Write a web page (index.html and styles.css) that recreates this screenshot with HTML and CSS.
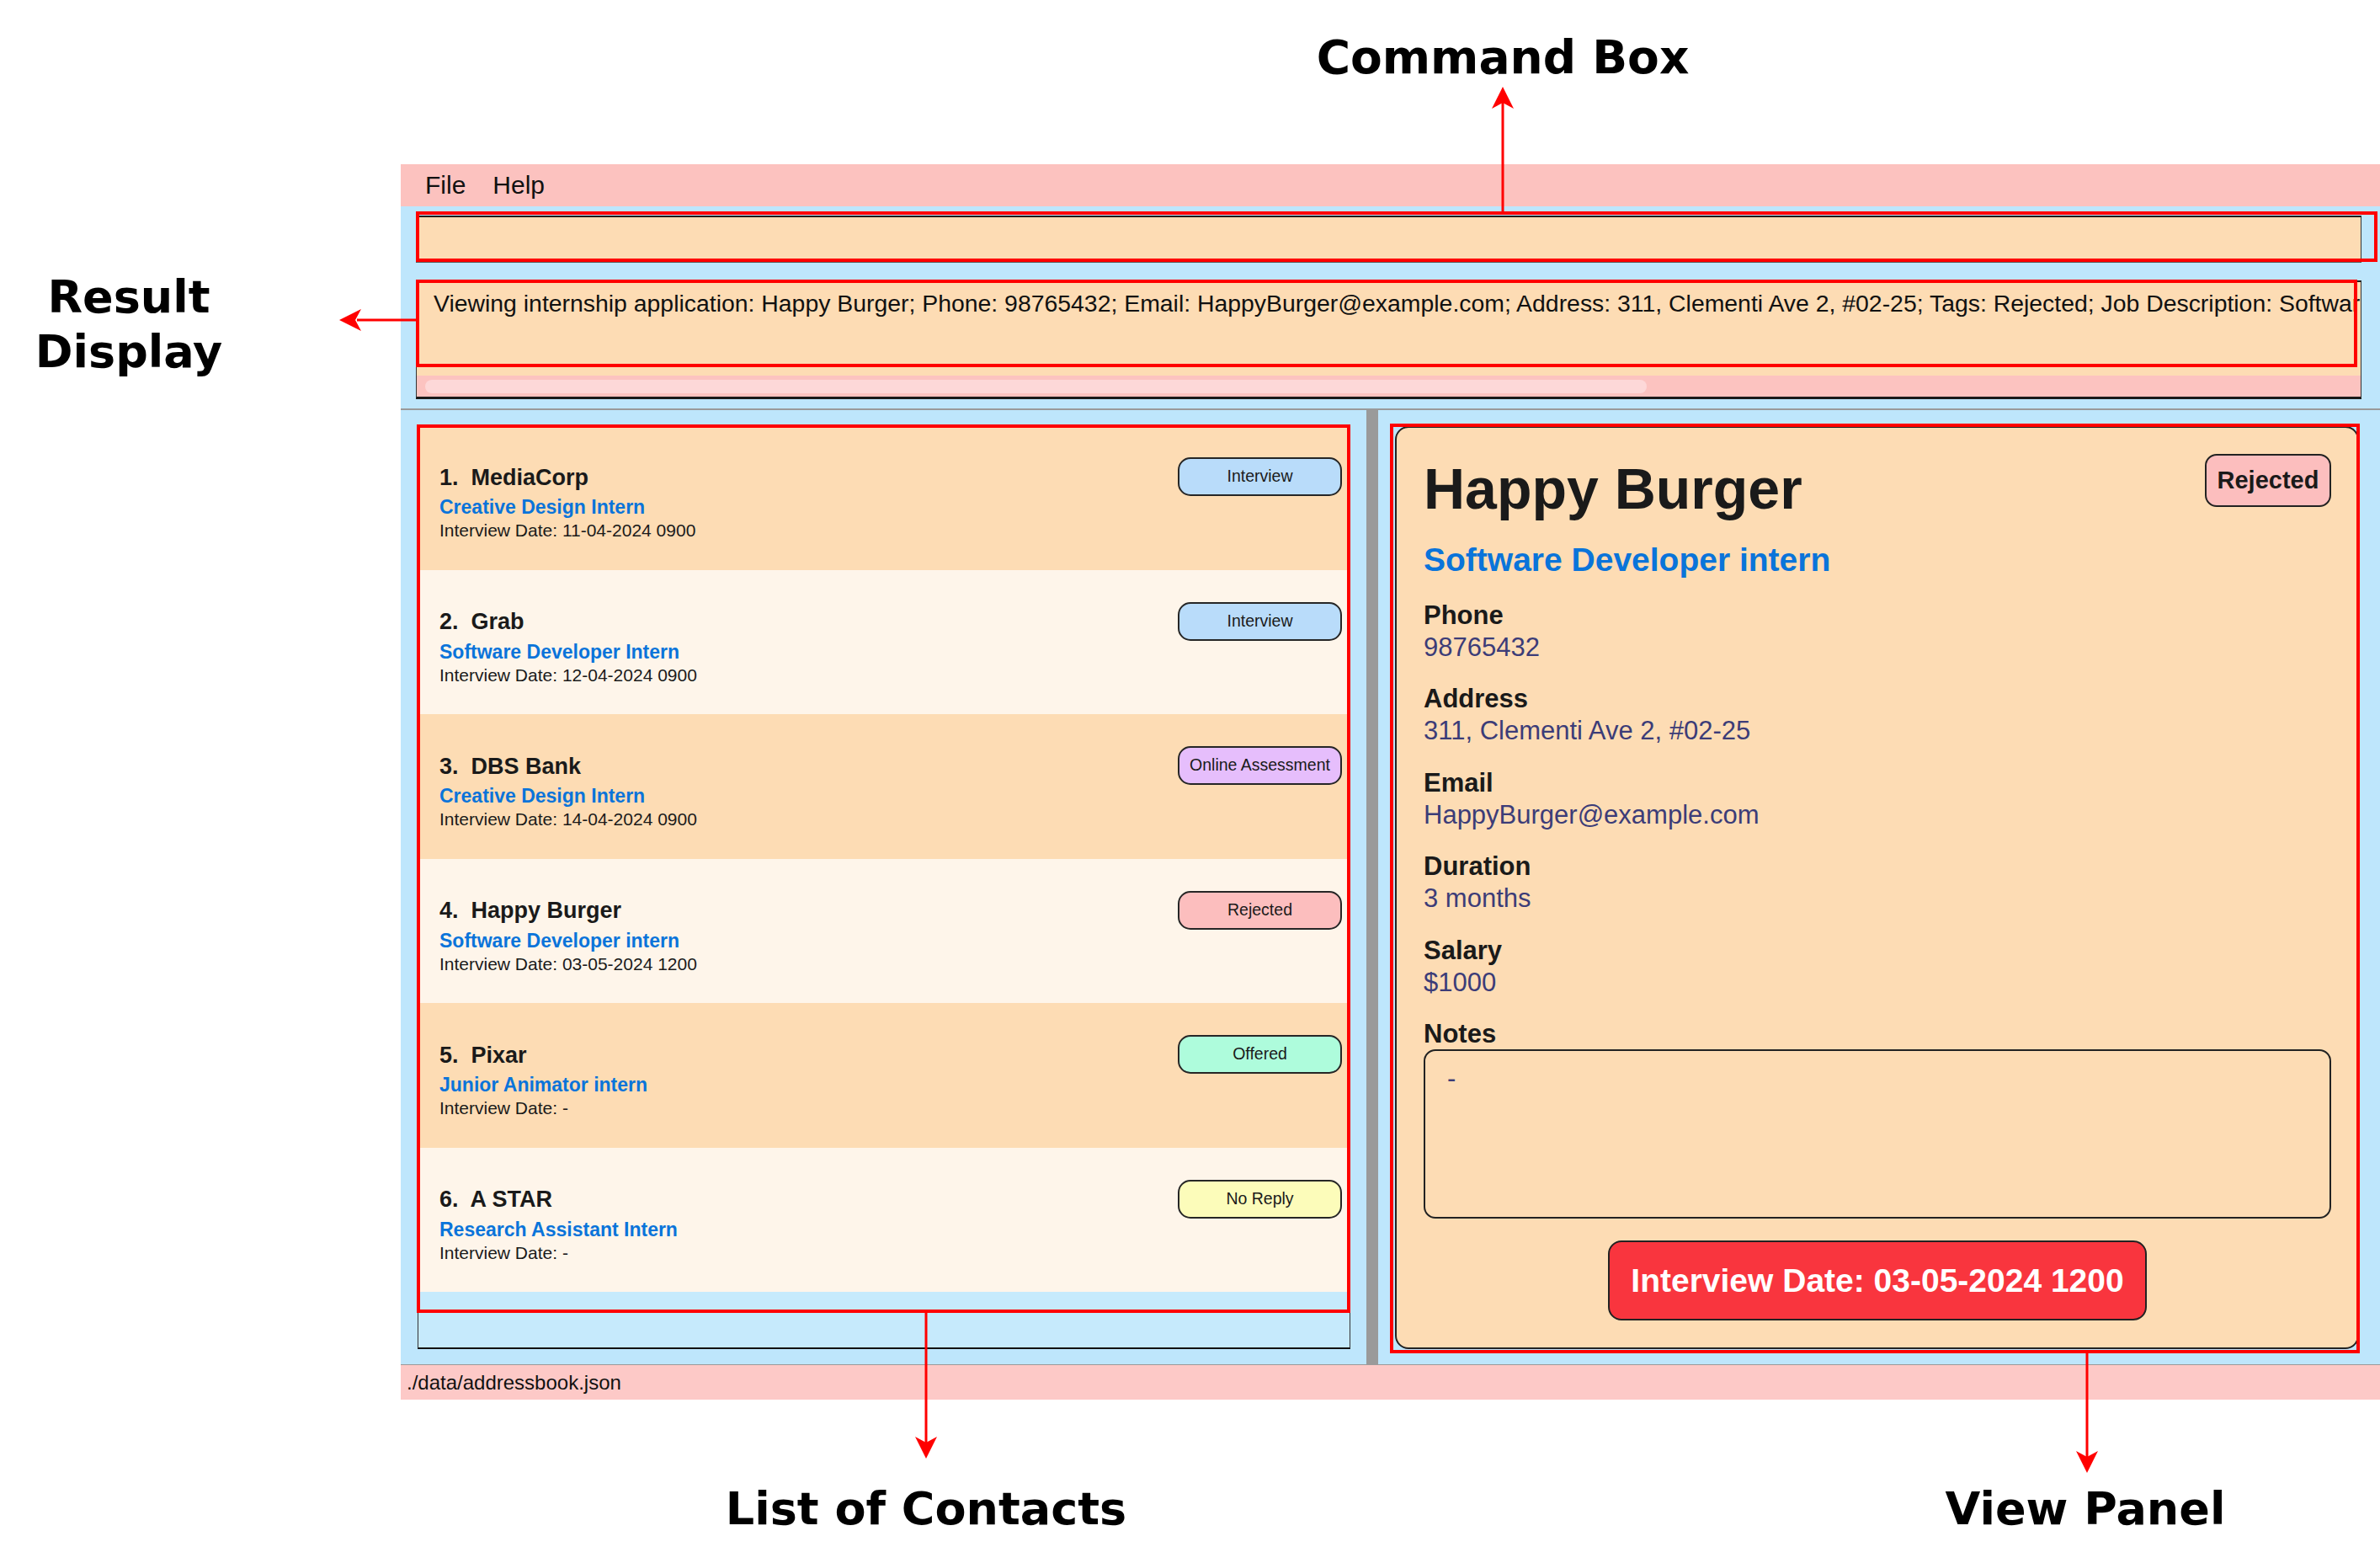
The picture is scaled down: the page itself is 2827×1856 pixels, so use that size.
FILE: index.html
```html
<!DOCTYPE html>
<html>
<head>
<meta charset="utf-8">
<title>Internship Tracker</title>
<link rel="stylesheet" href="styles.css">
</head>
<body>
<div class="canvas">
  <div class="window">
    <div class="menubar">
      <span class="menu">File</span>
      <span class="menu">Help</span>
    </div>
    <div class="main">
      <div class="command-area">
        <div class="command-box"></div>
        <div class="mark mark-command"></div>
      </div>
      <div class="result-area">
        <div class="result-box">
          <div class="result-text">Viewing internship application: Happy Burger; Phone: 98765432; Email: HappyBurger@example.com; Address: 311, Clementi Ave 2, #02-25; Tags: Rejected; Job Description: Software Developer intern; Interview Date: 03-05-2024 1200; Duration: 3 months; Salary: $1000; Notes: -</div>
          <div class="scrollbar"><div class="thumb"></div></div>
        </div>
        <div class="mark mark-result"></div>
      </div>
      <div class="split">
        <div class="list-pane">
          <div class="list-box">
            <div class="card odd">
              <div class="card-info">
                <div class="card-name">1.  MediaCorp</div>
                <div class="card-role">Creative Design Intern</div>
                <div class="card-date">Interview Date: 11-04-2024 0900</div>
              </div>
              <div class="tag tag-interview">Interview</div>
            </div>
            <div class="card even">
              <div class="card-info">
                <div class="card-name">2.  Grab</div>
                <div class="card-role">Software Developer Intern</div>
                <div class="card-date">Interview Date: 12-04-2024 0900</div>
              </div>
              <div class="tag tag-interview">Interview</div>
            </div>
            <div class="card odd">
              <div class="card-info">
                <div class="card-name">3.  DBS Bank</div>
                <div class="card-role">Creative Design Intern</div>
                <div class="card-date">Interview Date: 14-04-2024 0900</div>
              </div>
              <div class="tag tag-oa">Online Assessment</div>
            </div>
            <div class="card even">
              <div class="card-info">
                <div class="card-name">4.  Happy Burger</div>
                <div class="card-role">Software Developer intern</div>
                <div class="card-date">Interview Date: 03-05-2024 1200</div>
              </div>
              <div class="tag tag-rejected">Rejected</div>
            </div>
            <div class="card odd">
              <div class="card-info">
                <div class="card-name">5.  Pixar</div>
                <div class="card-role">Junior Animator intern</div>
                <div class="card-date">Interview Date: -</div>
              </div>
              <div class="tag tag-offered">Offered</div>
            </div>
            <div class="card even">
              <div class="card-info">
                <div class="card-name">6.  A STAR</div>
                <div class="card-role">Research Assistant Intern</div>
                <div class="card-date">Interview Date: -</div>
              </div>
              <div class="tag tag-noreply">No Reply</div>
            </div>
          </div>
          <div class="mark mark-list"></div>
        </div>
        <div class="divider"></div>
        <div class="view-pane">
          <div class="view-card">
            <div class="view-header">
              <div class="view-title">Happy Burger</div>
              <div class="view-tag">Rejected</div>
            </div>
            <div class="view-role">Software Developer intern</div>
            <div class="field">
              <div class="field-label">Phone</div>
              <div class="field-value">98765432</div>
            </div>
            <div class="field">
              <div class="field-label">Address</div>
              <div class="field-value">311, Clementi Ave 2, #02-25</div>
            </div>
            <div class="field">
              <div class="field-label">Email</div>
              <div class="field-value">HappyBurger@example.com</div>
            </div>
            <div class="field">
              <div class="field-label">Duration</div>
              <div class="field-value">3 months</div>
            </div>
            <div class="field">
              <div class="field-label">Salary</div>
              <div class="field-value">$1000</div>
            </div>
            <div class="field">
              <div class="field-label">Notes</div>
            </div>
            <div class="notes-box">-</div>
            <div class="date-button">Interview Date: 03-05-2024 1200</div>
          </div>
          <div class="mark mark-view"></div>
        </div>
      </div>
    </div>
    <div class="statusbar">./data/addressbook.json</div>
  </div>

  <svg class="arrows" width="2827" height="1856" viewBox="0 0 2827 1856">
    <line x1="1785" y1="251" x2="1785" y2="120" />
    <polygon points="1785,103 1772,129 1785,122 1798,129" />
    <line x1="494" y1="380" x2="424" y2="380" />
    <polygon points="403,380 429,367 422,380 429,393" />
    <line x1="1100" y1="1559" x2="1100" y2="1715" />
    <polygon points="1100,1732 1087,1706 1100,1713 1113,1706" />
    <line x1="2479" y1="1607" x2="2479" y2="1732" />
    <polygon points="2479,1749 2466,1723 2479,1730 2492,1723" />
  </svg>

  <div class="note note-command">Command Box</div>
  <div class="note note-result">Result<br>Display</div>
  <div class="note note-list">List of Contacts</div>
  <div class="note note-view">View Panel</div>
</div>
</body>
</html>
```

FILE: styles.css
```css
* {
  box-sizing: border-box;
}

html,
body {
  margin: 0;
  padding: 0;
  background: #ffffff;
}

body {
  width: 2827px;
  height: 1856px;
  overflow: hidden;
  font-family: "Liberation Sans", Arial, sans-serif;
  color: #1a1a1a;
}

.canvas {
  position: relative;
  width: 2827px;
  height: 1856px;
  padding-top: 195px;
  padding-left: 476px;
}

.window {
  width: 2351px;
  display: flex;
  flex-direction: column;
}

/* Menu bar */
.menubar {
  height: 50px;
  background: #fcc2bf;
  display: flex;
  align-items: center;
  padding-left: 13px;
}

.menu {
  font-size: 30px;
  line-height: 1;
  padding: 0 16px;
  color: #111111;
}

/* Main area */
.main {
  background: #bee6fc;
  display: flex;
  flex-direction: column;
}

.command-area {
  position: relative;
  padding: 11px 22px 10px 18px;
}

.command-box {
  height: 56px;
  background: #fddcb4;
  border: 1px solid #333333;
  border-top: 2px solid #1e1e1e;
  border-bottom: 2px solid #5a5a5a;
}

.result-area {
  position: relative;
  padding: 11px 22px 11px 18px;
}

.result-box {
  border: 1px solid #333333;
  border-top: 2px solid #1e1e1e;
  border-bottom: 3px solid #1a1a1a;
  background: #fddcb4;
}

.result-text {
  height: 111px;
  padding: 11px 20px 0 20px;
  font-size: 28.4px;
  line-height: 1;
  white-space: nowrap;
  overflow: hidden;
  color: #111111;
}

.scrollbar {
  height: 25px;
  background: #fcc3c0;
  padding: 5px 10px 4px 10px;
}

.thumb {
  width: 1451px;
  height: 16px;
  border-radius: 8px;
  background: #fdd8d8;
}

/* Split pane */
.split {
  display: flex;
  height: 1136px;
  border-top: 2px solid #9a9a9a;
  border-bottom: 1px solid #9a9a9a;
}

.list-pane {
  position: relative;
  width: 1147px;
  flex: none;
  padding: 17px 19px 18px 20px;
}

.list-box {
  height: 100%;
  border: 1px solid #333333;
  border-bottom: 2px solid #111111;
  background: #c6eafc;
  overflow: hidden;
}

.card {
  height: 171.5px;
  display: flex;
  justify-content: space-between;
  align-items: flex-start;
  padding: 0 9px 0 25px;
}

.card.odd {
  background: #fddcb4;
}

.card.even {
  background: #fef5ea;
}

.card-info {
  padding-top: 48.5px;
}

.card-name {
  font-size: 27px;
  font-weight: bold;
  line-height: 1;
  color: #1a1a1a;
  white-space: pre;
}

.card-role {
  margin-top: 10.5px;
  font-size: 23px;
  font-weight: bold;
  line-height: 1;
  color: #0a74da;
}

.card-date {
  margin-top: 5px;
  font-size: 21px;
  line-height: 1;
  color: #1a1a1a;
}

.tag {
  margin-top: 38px;
  width: 195px;
  height: 46px;
  border: 2px solid #262626;
  border-radius: 15px;
  display: flex;
  align-items: center;
  justify-content: center;
  font-size: 19.5px;
  line-height: 1;
  color: #1a1a1a;
}

.tag-interview {
  background: #b9dcfa;
}

.tag-oa {
  background: #e6befc;
}

.tag-rejected {
  background: #fcbebe;
}

.tag-offered {
  background: #aefcdc;
}

.tag-noreply {
  background: #fcfcba;
}

.divider {
  width: 14px;
  flex: none;
  background: #9a9a9a;
}

/* View panel */
.view-pane {
  position: relative;
  flex: 1;
  padding: 19px 25px 18px 20px;
}

.view-card {
  height: 100%;
  border: 2px solid #222222;
  border-radius: 16px;
  background: #fddcb4;
  padding: 31px 31px 0 32px;
  display: flex;
  flex-direction: column;
}

.view-header {
  display: flex;
  justify-content: space-between;
  align-items: flex-start;
}

.view-title {
  margin-top: 7px;
  font-size: 68px;
  font-weight: bold;
  line-height: 1;
  color: #1a1a1a;
}

.view-tag {
  width: 150px;
  height: 63px;
  border: 2px solid #222222;
  border-radius: 14px;
  background: #fcbebe;
  display: flex;
  align-items: center;
  justify-content: center;
  font-size: 29px;
  font-weight: bold;
  line-height: 1;
  color: #1a1a1a;
}

.view-role {
  margin-top: 31px;
  font-size: 39px;
  font-weight: bold;
  line-height: 1;
  color: #0a74da;
}

.field {
  margin-top: 30.5px;
}

.field-label {
  font-size: 31px;
  font-weight: bold;
  line-height: 1;
  color: #1a1a1a;
}

.field-value {
  margin-top: 7px;
  font-size: 31px;
  line-height: 1;
  color: #3c3c78;
}

.notes-box {
  margin-top: 2.5px;
  height: 201px;
  border: 2px solid #222222;
  border-radius: 14px;
  padding: 17px 26px;
  font-size: 31px;
  line-height: 1;
  color: #3c3c78;
}

.date-button {
  align-self: center;
  margin-top: 26px;
  height: 95px;
  padding: 0 25px;
  display: flex;
  align-items: center;
  background: #f9353e;
  border: 2px solid #222222;
  border-radius: 16px;
  color: #ffffff;
  font-size: 39px;
  font-weight: bold;
  line-height: 1;
}

/* Status bar */
.statusbar {
  height: 41px;
  background: #fdc9c7;
  padding-left: 7px;
  display: flex;
  align-items: center;
  font-size: 24px;
  line-height: 1;
  color: #111111;
}

/* Annotation overlays */
.mark {
  position: absolute;
  border: 4px solid #ff0000;
  pointer-events: none;
}

.mark-command {
  left: 18px;
  top: 6px;
  width: 2330px;
  height: 60px;
}

.mark-result {
  left: 18px;
  top: 10px;
  width: 2306px;
  height: 104px;
}

.mark-list {
  left: 19px;
  top: 17px;
  width: 1109px;
  height: 1055px;
}

.mark-view {
  left: 14px;
  top: 16px;
  width: 1152px;
  height: 1104px;
}

.arrows {
  position: absolute;
  left: 0;
  top: 0;
  pointer-events: none;
}

.arrows line {
  stroke: #ff0000;
  stroke-width: 3;
}

.arrows polygon {
  fill: #ff0000;
}

.note {
  position: absolute;
  font-family: "DejaVu Sans", "Liberation Sans", sans-serif;
  font-weight: bold;
  font-size: 54px;
  line-height: 1;
  color: #000000;
  text-align: center;
  white-space: nowrap;
}

.note-command {
  left: 1485px;
  top: 41px;
  width: 600px;
  font-size: 55px;
}

.note-result {
  left: 0;
  top: 320px;
  width: 306px;
  line-height: 65px;
}

.note-list {
  left: 800px;
  top: 1765px;
  width: 600px;
}

.note-view {
  left: 2177px;
  top: 1765px;
  width: 600px;
}
```
